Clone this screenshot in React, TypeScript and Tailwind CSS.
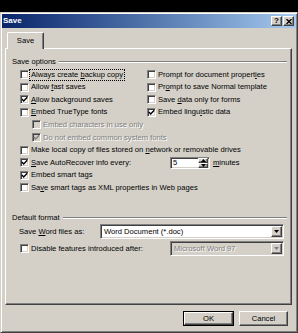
import React from 'react'

// ─── Classic 3D borders ──────────────────────────────────────────────────────

const raised =
  'border border-t-white border-l-white border-r-[#404040] border-b-[#404040] shadow-[inset_-1px_-1px_#808080]'
const sunken =
  'border border-t-[#808080] border-l-[#808080] border-r-white border-b-white shadow-[inset_1px_1px_#404040,inset_-1px_-1px_#d4d0c8]'
const grayText = 'text-[#808080] [text-shadow:1px_1px_0_#fff]'

// ─── Bits ────────────────────────────────────────────────────────────────────

function Check({ checked, disabled }: { checked?: boolean; disabled?: boolean }) {
  return (
    <span
      className={`${sunken} w-[9px] h-[9px] shrink-0 flex items-center justify-center ${
        disabled ? 'bg-[#d4d0c8]' : 'bg-white'
      }`}
    >
      {checked && (
        <svg width="7" height="7" viewBox="0 0 7 7">
          <path
            d="M0.9 3 L2.7 4.9 L6.2 1.2"
            fill="none"
            stroke={disabled ? '#808080' : '#000'}
            strokeWidth="1.4"
          />
        </svg>
      )}
    </span>
  )
}

function Row({
  checked,
  disabled,
  focus,
  children,
}: {
  checked?: boolean
  disabled?: boolean
  focus?: boolean
  children: React.ReactNode
}) {
  return (
    <div className="h-[12.6px] flex items-center gap-[1px] whitespace-nowrap">
      <Check checked={checked} disabled={disabled} />
      <span
        className={`px-[1px] leading-[10px] ${disabled ? grayText : ''} ${
          focus ? 'outline outline-1 outline-dotted outline-black' : ''
        }`}
      >
        {children}
      </span>
    </div>
  )
}

function Header({ children }: { children: React.ReactNode }) {
  return (
    <div className="h-[12.6px] flex items-center pl-[6px] pr-[4px] gap-[3px] whitespace-nowrap">
      <span>{children}</span>
      <div className="flex-1 h-[2px] border-t border-t-[#808080] border-b border-b-white" />
    </div>
  )
}

function Arrow({ up, color = '#000' }: { up?: boolean; color?: string }) {
  return (
    <svg width="5" height="3" viewBox="0 0 5 3">
      <path d={up ? 'M2.5 0 L5 3 L0 3 Z' : 'M0 0 L5 0 L2.5 3 Z'} fill={color} />
    </svg>
  )
}

function Select({ value, disabled, w }: { value: string; disabled?: boolean; w: string }) {
  return (
    <div
      className={`${sunken} ${w} h-[15px] flex items-center pl-[3px] pr-[1px] ${
        disabled ? 'bg-[#d4d0c8]' : 'bg-white'
      }`}
    >
      <span className={`flex-1 whitespace-nowrap ${disabled ? grayText : ''}`}>{value}</span>
      <div className={`${raised} w-[11px] h-[11px] bg-[#d4d0c8] flex items-center justify-center`}>
        <Arrow color={disabled ? '#808080' : '#000'} />
      </div>
    </div>
  )
}

const U = ({ children }: { children: React.ReactNode }) => (
  <span className="underline underline-offset-[1px]">{children}</span>
)

// ─── Dialog ──────────────────────────────────────────────────────────────────

export default function App() {
  return (
    <div
      className="min-h-screen bg-black pt-[12px] text-[7.6px] text-black"
      style={{ fontFamily: '"Liberation Sans", Arial, sans-serif' }}
    >
      <div className="w-[298px] h-[321px] bg-[#d4d0c8] p-[1px] border border-t-[#d4d0c8] border-l-[#d4d0c8] border-r-[#404040] border-b-[#404040] shadow-[inset_1px_1px_#fff,inset_-1px_-1px_#808080]">
        {/* ── Title bar ── */}
        <div className="h-[14px] flex items-center pl-[1px] pr-[2px] bg-gradient-to-r from-[#0a246a] to-[#a6caf0]">
          <span className="flex-1 text-white font-bold text-[8px]">Save</span>
          <div className="flex gap-[1px]">
            <div className={`${raised} w-[11px] h-[10px] bg-[#d4d0c8] flex items-center justify-center font-bold text-[8px] leading-none`}>
              ?
            </div>
            <div className={`${raised} w-[11px] h-[10px] bg-[#d4d0c8] flex items-center justify-center`}>
              <svg width="6" height="5" viewBox="0 0 6 5">
                <path d="M0.5 0 L5.5 5 M5.5 0 L0.5 5" stroke="#000" strokeWidth="1.3" />
              </svg>
            </div>
          </div>
        </div>

        {/* ── Tab ── */}
        <div className="mt-[4px] pl-[5px] h-[16px] relative z-10">
          <div className="w-[37px] h-[17px] bg-[#d4d0c8] border-t border-l border-t-white border-l-white border-r border-r-[#404040] rounded-t-[2px] shadow-[inset_-1px_0_#808080] flex items-center justify-center pb-[1px]">
            Save
          </div>
        </div>

        {/* ── Panel ── */}
        <div className="ml-[3px] w-[287px] h-[257px] border border-t-white border-l-white border-r-[#404040] border-b-[#404040] shadow-[inset_-1px_-1px_#808080] pt-[6.7px]">
          <Header>Save options</Header>

          <div className="pl-[14px]">
            <div className="grid grid-cols-[127px_1fr]">
              <Row focus>
                Always create <U>b</U>ackup copy
              </Row>
              <Row>
                Prompt for document propert<U>i</U>es
              </Row>
              <Row>
                Allow <U>f</U>ast saves
              </Row>
              <Row>
                Pr<U>o</U>mpt to save Normal template
              </Row>
              <Row checked>
                <U>A</U>llow background saves
              </Row>
              <Row>
                Save <U>d</U>ata only for forms
              </Row>
              <Row>
                <U>E</U>mbed TrueType fonts
              </Row>
              <Row checked>
                Embed lingu<U>i</U>stic data
              </Row>
            </div>

            <div className="pl-[12px]">
              <Row disabled>Embed characters in use only</Row>
              <Row disabled checked>
                Do not embed common system fonts
              </Row>
            </div>

            <Row>
              Make local copy of files stored on <U>n</U>etwork or removable drives
            </Row>

            <div className="h-[12.6px] flex items-center whitespace-nowrap">
              <div className="w-[150px] flex items-center gap-[1px]">
                <Check checked />
                <span className="px-[1px]">
                  <U>S</U>ave AutoRecover info every:
                </span>
              </div>
              <div className={`${sunken} w-[40px] h-[12px] bg-white flex items-center pl-[2px] pr-[1px]`}>
                <span className="flex-1">5</span>
                <div className="w-[10px] h-[9px] flex flex-col">
                  <div className={`${raised} flex-1 bg-[#d4d0c8] flex items-center justify-center`}>
                    <Arrow up />
                  </div>
                  <div className={`${raised} flex-1 bg-[#d4d0c8] flex items-center justify-center`}>
                    <Arrow />
                  </div>
                </div>
              </div>
              <span className="ml-[3px]">
                <U>m</U>inutes
              </span>
            </div>

            <Row checked>Embed smart tags</Row>
            <Row>
              Sa<U>v</U>e smart tags as XML properties in Web pages
            </Row>
          </div>

          <div className="mt-[17.1px]">
            <Header>Default format</Header>
          </div>

          <div className="h-[15px] flex items-center pl-[13px] whitespace-nowrap">
            <span className="w-[81px]">
              Save <U>W</U>ord files as:
            </span>
            <Select value="Word Document (*.doc)" w="w-[184px]" />
          </div>

          <div className="mt-[2.5px] h-[15px] flex items-center pl-[14px] whitespace-nowrap">
            <div className="w-[150px] flex items-center gap-[1px]">
              <Check />
              <span className="px-[1px]">Disable features introduced after:</span>
            </div>
            <Select value="Microsoft Word 97" w="w-[114px]" disabled />
          </div>
        </div>

        {/* ── Buttons ── */}
        <div className="mt-[6px] flex justify-end gap-[5px] pr-[8px]">
          <div className="w-[51px] h-[15px] border border-black">
            <div className={`${raised} w-full h-full bg-[#d4d0c8] flex items-center justify-center`}>OK</div>
          </div>
          <div className={`${raised} w-[49px] h-[15px] bg-[#d4d0c8] flex items-center justify-center`}>
            Cancel
          </div>
        </div>
      </div>
    </div>
  )
}
